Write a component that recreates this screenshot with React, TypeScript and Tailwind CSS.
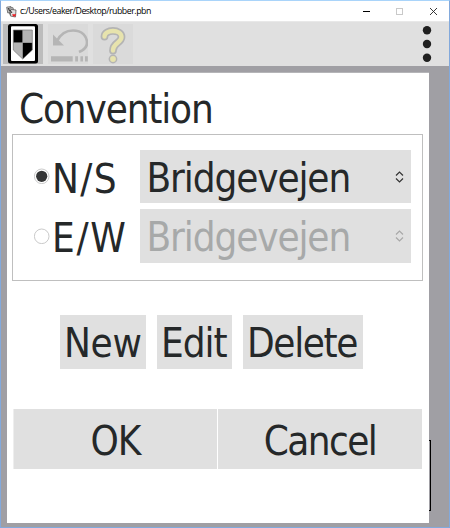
import React from "react";

const big = "font-['DejaVu_Sans_Condensed','DejaVu_Sans',sans-serif] [font-stretch:condensed] text-[40px] leading-[54px] whitespace-nowrap";

function Chevrons({ color }: { color: string }) {
  return (
    <svg width="9" height="12" viewBox="0 0 9 12" fill="none" stroke={color} strokeWidth="1.2">
      <path d="M1 4.5 4.5 1 8 4.5M1 7.5 4.5 11 8 7.5" />
    </svg>
  );
}

function Radio({ checked }: { checked?: boolean }) {
  return (
    <svg width="16" height="16" viewBox="0 0 16 16">
      <circle cx="7.7" cy="8.3" r="7.3" fill="#fff" stroke="#bdbdbd" strokeWidth="0.8" />
      {checked && <circle cx="7.7" cy="8.3" r="5.6" fill="#353637" />}
    </svg>
  );
}

function ShieldIcon() {
  return (
    <svg width="40" height="40" viewBox="0 0 40 40">
      <rect width="40" height="40" fill="#bcbcbc" />
      <rect x="5" y="0" width="30" height="39.5" rx="2.5" fill="#000" />
      <rect x="8" y="2.2" width="24" height="34.8" rx="1" fill="#fff" />
      <path d="M10.3 6H19.7V18.7H10.3Z" fill="#000" />
      <path d="M19.7 6H29.3V18.7H19.7Z" fill="#b4b4b4" />
      <path d="M10.3 18.7H19.7V35L10.3 26Z" fill="#b4b4b4" />
      <path d="M19.7 18.7H29.3V26L19.7 35Z" fill="#000" />
      <path d="M10.3 6H29.3V26L19.7 35 10.3 26Z" fill="none" stroke="#777" strokeWidth="0.7" />
    </svg>
  );
}

function UndoIcon() {
  return (
    <svg width="40" height="40" viewBox="0 0 40 40">
      <rect width="40" height="40" fill="#dadada" />
      <path d="M9 17C13 9 19 6.5 25 6.5C34 6.5 39 12 39 19C39 23 36 26 31 28" fill="none" stroke="#b5b5b5" strokeWidth="2.7" />
      <path d="M5 10.5V21.5H16Z" fill="#b5b5b5" />
      <path d="M3 32.2H24.7V37.5H3ZM27.2 32.2H30V37.5H27.2ZM32.4 32.2H35V37.5H32.4ZM37 32.2H39.8V37.5H37Z" fill="#b5b5b5" />
    </svg>
  );
}

function HelpIcon() {
  return (
    <svg width="40" height="40" viewBox="0 0 40 40" fill="none" strokeLinecap="round" strokeLinejoin="round">
      <rect width="40" height="40" fill="#dadada" />
      <path d="M11.5 12.5C11.5 5 28.5 5 28.5 13C28.5 19 20 18.5 20 26.5" stroke="#b4b4b4" strokeWidth="7.8" />
      <circle cx="20" cy="35" r="4.4" fill="#b4b4b4" />
      <path d="M11.5 12.5C11.5 5 28.5 5 28.5 13C28.5 19 20 18.5 20 26.5" stroke="#e7e3ad" strokeWidth="4.4" />
      <circle cx="20" cy="35" r="2.9" fill="#e7e3ad" />
    </svg>
  );
}

function AppIcon() {
  return (
    <svg width="12" height="12" viewBox="0 0 12 12">
      <g stroke="#555" strokeWidth="0.8" fill="#dedede">
        <path d="M.7 1.2 5 .6 6 6 1.8 7Z" />
        <path d="M2.7 2.3 7 1.7 8 7.5 3.7 8.3Z" />
        <path d="M4.7 3.4 10 4 9.5 11 4.4 10Z" />
      </g>
      <path d="M2 2l2 3M4 4l2 3" stroke="#333" />
      <path d="M8 11 6.2 8.9C6.3 7.7 7.4 7.7 8 8.5 8.6 7.7 10 7.7 10 8.9Z" fill="#ed2024" />
    </svg>
  );
}

export default function App() {
  return (
    <div className="flex h-[528px] w-[450px] flex-col border border-[#82a9dc] border-t-[#a9d4fa] bg-[#a09fa4] text-[#252829]">
      <header className="flex h-5 shrink-0 items-center bg-white">
        <div className="ml-[5px] mt-px"><AppIcon /></div>
        <span className="ml-[2px] whitespace-nowrap font-['Open_Sans','Noto_Sans',sans-serif] text-[8.8px] leading-5 tracking-[-0.47px] text-black">c:/Users/eaker/Desktop/rubber.pbn</span>
        <svg className="ml-auto mr-[11px]" width="75" height="9" viewBox="0 0 75 9" fill="none">
          <path d="M0 4.5H7" stroke="#000" />
          <rect x="33.5" y="1.5" width="6" height="6" stroke="#c9c9c9" />
          <path d="m67 1 7 7m0-7-7 7" stroke="#222" strokeWidth="0.9" />
        </svg>
      </header>

      <div className="flex h-[45px] shrink-0 items-start gap-[5px] border-t border-[#e8e8e8] bg-[#e0e0e0] pl-[2px] pt-[2px]">
        <ShieldIcon />
        <UndoIcon />
        <HelpIcon />
        <svg className="ml-auto mr-[17px]" width="10" height="40" viewBox="0 0 10 40">
          <circle cx="5" cy="6.2" r="4.2" fill="#202020" />
          <circle cx="5" cy="20" r="4.2" fill="#202020" />
          <circle cx="5" cy="33.7" r="4.2" fill="#202020" />
        </svg>
      </div>

      <div className="flex h-[457px] items-start pl-[6px] pt-[6px]">
        <main className="flex h-[451px] w-[422px] shrink-0 flex-col border-t border-[#b5b5b8] bg-white">
          <h1 className={`${big} ml-[12px] mt-[9px] h-[52px] tracking-[-1.15px]`}>Convention</h1>
          <section className="ml-[5px] flex h-[147px] w-[411px] flex-col gap-[6px] border border-[#bfbfbf] pl-[21px] pt-[15px]">
            <div className="flex h-[53px] items-start">
              <div className="mt-[18px]"><Radio checked /></div>
              <span className={`${big} ml-[2px] mt-[2px] w-[88px] tracking-[1.3px]`}>N/S</span>
              <div className="flex h-[53px] w-[271px] items-center justify-between bg-[#e0e0e0] pl-[6.5px] pr-[7px]">
                <span className={`${big} mt-[2px] tracking-[-1.1px]`}>Bridgevejen</span>
                <Chevrons color="#333" />
              </div>
            </div>
            <div className="flex h-[54px] items-start">
              <div className="mt-[19px]"><Radio /></div>
              <span className={`${big} ml-[2px] mt-[2px] w-[88px] tracking-[1.7px]`}>E/W</span>
              <div className="flex h-[54px] w-[271px] items-center justify-between bg-[#e0e0e0] pl-[6.5px] pr-[7px] text-[#a7a9a9]">
                <span className={`${big} mt-[2px] tracking-[-1.1px]`}>Bridgevejen</span>
                <Chevrons color="#a8a8a8" />
              </div>
            </div>
          </section>
          <div className="ml-[53px] mt-[34px] flex h-[54px] gap-[11px]">
            <button className={`${big} w-[86px] bg-[#e0e0e0] pl-[4px] pt-[1px] text-left tracking-[-0.3px]`}>New</button>
            <button className={`${big} w-[75px] bg-[#e0e0e0] pl-[4px] pt-[1px] text-left tracking-[-1px]`}>Edit</button>
            <button className={`${big} w-[120px] bg-[#e0e0e0] pl-[4px] pt-[1px] text-left tracking-[-1.35px]`}>Delete</button>
          </div>
          <div className="ml-[6px] mt-[40px] flex h-[60px] gap-px">
            <button className={`${big} w-[204px] border-l border-[#eeeeee] bg-[#e0e0e0] pt-[4px] text-center tracking-[-1px]`}>OK</button>
            <button className={`${big} w-[204px] bg-[#e0e0e0] pt-[4px] text-center tracking-[-1.6px]`}>Cancel</button>
          </div>
        </main>
        <div className="mt-[368px] h-[71px] w-[2px] border-y border-r border-black" />
      </div>
    </div>
  );
}
